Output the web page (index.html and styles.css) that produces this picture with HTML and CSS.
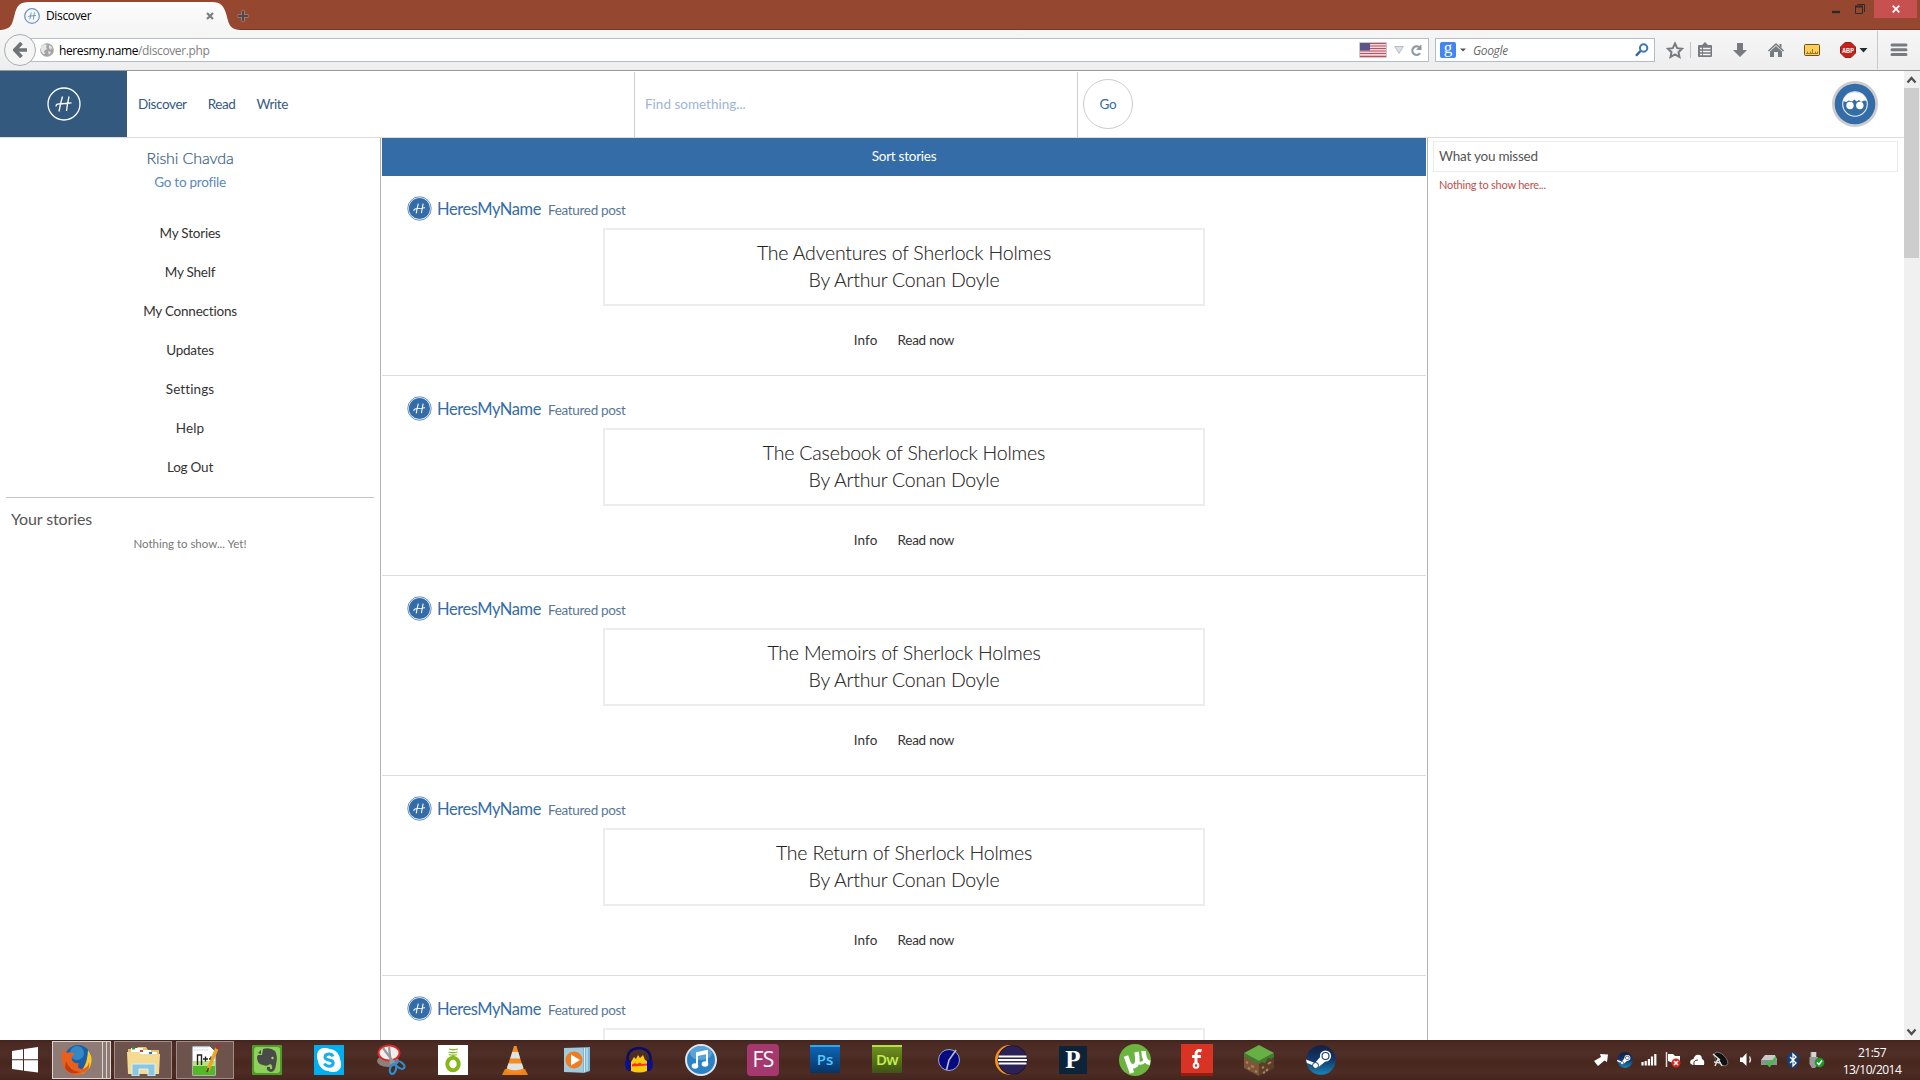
FILE: index.html
```
<!DOCTYPE html>
<html lang="en">
<head>
<meta charset="utf-8">
<title>Discover</title>
<link rel="stylesheet" href="styles.css">
</head>
<body>
<svg class="defs" aria-hidden="true">
  <symbol id="mark" viewBox="0 0 34 34"><circle cx="17" cy="17" r="16" fill="none" stroke="currentColor" stroke-width="1.3"/><path d="M15.500 9.500 13.500 17 12 24.500M22 9.500 20.500 17 19.500 24M9 19.500Q9 16.500 13 17L24.500 15.800" fill="none" stroke="currentColor" stroke-width="1.3"/></symbol>
  <symbol id="badge" viewBox="0 0 26 26"><circle cx="13" cy="13" r="12.200" fill="#fff" stroke="#346ca8" stroke-width=".8"/><circle cx="13" cy="13" r="11" fill="#346ca8"/><path d="M11.800 8 10.500 13 9.600 18M16.800 8 15.800 13 15 17.800M7 15.500Q7.500 12.800 11 13L18.800 12.200" fill="none" stroke="#fff" stroke-width="1.1"/></symbol>
  <symbol id="steam" viewBox="0 0 30 30"><linearGradient id="sg" x2="0" y2="1"><stop stop-color="#14203f"/><stop offset=".5" stop-color="#12386d"/><stop offset="1" stop-color="#1787b8"/></linearGradient><circle cx="15" cy="15" r="14.800" fill="url(#sg)"/><path d="M0 14.500 9 18 15 11 20 16 12.500 22Q9 26 6 20L.8 18Z" fill="#fff"/><circle cx="19.500" cy="11" r="5.600" fill="#fff"/><circle cx="19.500" cy="11" r="4" fill="#15396d"/><circle cx="19.500" cy="11" r="2.900" fill="#fff"/><circle cx="9.500" cy="20.500" r="3" fill="none" stroke="#15406f"/></symbol>
</svg>

<header class="titlebar">
  <svg class="tab-shape" width="240" height="30" viewBox="0 0 240 30"><defs><linearGradient id="tg" x2="0" y2="1"><stop stop-color="#fdfdfd"/><stop offset="1" stop-color="#f5f5f5"/></linearGradient></defs><path d="M0 30C12 29 12 24 14.500 15 17 5 20 2 29 2H212C221 2 224 6 226.500 15 229 25 230 29 240 30Z" fill="url(#tg)"/></svg>
  <div class="tab">
    <svg class="fav" width="16" height="16" viewBox="0 0 16 16"><circle cx="8" cy="8" r="7.300" fill="none" stroke="#6b9ac6" stroke-width="1.300"/><path d="M7.200 4.500 5.800 11.500M10.400 4.500 9.300 11.500M4 9Q4.500 7.800 6.500 8L12 7.500" fill="none" stroke="#6b9ac6"/></svg>
    <span class="tab-title">Discover</span>
    <svg class="tab-x" width="8" height="8" viewBox="0 0 8 8"><path d="M1 1 7 7M7 1 1 7" stroke="#7c8084" stroke-width="2.300"/></svg>
  </div>
  <svg class="newtab" width="12" height="12" viewBox="0 0 12 12"><path d="M6 .5V11.500M.5 6H11.500" stroke="#a9837a" stroke-width="3.600"/><path d="M6 1V11M1 6H11" stroke="#4b4a50" stroke-width="2"/></svg>
  <div class="wincontrols">
    <svg width="43" height="18" viewBox="0 0 43 18"><path d="M1 12H9" stroke="#2b2b2b" stroke-width="2.400"/><path d="M24.500 6.500H31.500V13.500H24.500ZM26.500 4.500H33.500V12" fill="none" stroke="#2b2b2b"/><path d="M24 6.500H32" stroke="#2b2b2b" stroke-width="2"/></svg>
    <div class="close"><svg width="8" height="8" viewBox="0 0 8 8"><path d="M.7.7 7.300 7.300M7.300.7.7 7.300" stroke="#fff" stroke-width="1.700"/></svg></div>
  </div>
</header>

<div class="toolbar">
  <div class="back"><svg width="15" height="16" viewBox="0 0 15 16"><path d="M8.500 1 1.800 8 8.500 15M2 8H14" fill="none" stroke="#6f7478" stroke-width="3.700"/></svg></div>
  <div class="urlbar">
    <svg width="14" height="14" viewBox="0 0 14 14"><circle cx="7" cy="7" r="6.800" fill="#a4a4a4"/><path d="M1 4 4 1 7 2 6 4 7 6 4 8 5 11 3 11 1 8ZM9 2 12 4 11 7 9 5ZM8 8 11 9 9 12Z" fill="#e6e6e6"/></svg>
    <span class="url"><b>heresmy.name</b>/discover.php</span>
    <svg class="flag" width="28" height="16" viewBox="0 0 28 16"><path d="M.5.5H27.500V15.500H.5Z" fill="#efd7db" stroke="#cfc8c8"/><path d="M1 1.500H27M1 4H27M1 6.500H27M1 9H27M1 11.500H27M1 14.300H27" stroke="#ba5060" stroke-width="1.200"/><path d="M1 1H11V8.500H1Z" fill="#5a5488"/></svg>
    <svg class="drop" width="10" height="8" viewBox="0 0 10 8"><path d="M.7.5H9.300L5 7.300Z" fill="#dce1e7" stroke="#b3bcc4"/></svg>
    <svg class="reload" width="13" height="13" viewBox="0 0 13 13"><path d="M10 9.300A4.300 4.300 0 1 1 9 3" fill="none" stroke="#8f99a3" stroke-width="2.200"/><path d="M6.500 6V5.200L10.500 1 11.500.8V6Z" fill="#8f99a3"/></svg>
  </div>
  <div class="search">
    <span class="g">g</span>
    <svg width="6" height="4" viewBox="0 0 6 4"><path d="M0 .5H6L3 3.500Z" fill="#555"/></svg>
    <i class="gname">Google</i>
    <svg class="mag" width="14" height="14" viewBox="0 0 14 14"><path d="M1 12.800 5.500 8" stroke="#2c62a0" stroke-width="2.400"/><circle cx="8.600" cy="5" r="3.700" fill="none" stroke="#3a7ab4" stroke-width="2"/></svg>
  </div>
  <svg class="tools" width="265" height="40" viewBox="1655 30 265 40">
    <path d="M1675 43.500 1677.200 48.200 1682 48.800 1678.500 52.200 1679.500 57 1675 54.500 1670.500 57 1671.500 52.200 1668 48.800 1672.800 48.200Z" fill="none" stroke="#777b7f" stroke-width="2"/>
    <path d="M1690.500 42V58" stroke="#bcc3ca"/>
    <path d="M1699 45H1702L1705 42 1708 45H1711Q1712 45 1712 46V56Q1712 57 1711 57H1699Q1698 57 1698 56V46Q1698 45 1699 45Z" fill="#777b7f"/><path d="M1700 48.500H1702M1703 48.500H1710.500M1700 51.500H1702M1703 51.500H1710.500M1700 54.500H1702M1703 54.500H1710.500" stroke="#f4f4f4" stroke-width="1.500"/>
    <path d="M1737 43H1743V50H1747L1740 57 1733 50H1737Z" fill="#777b7f"/>
    <path d="M1768.500 51 1776 44 1783.500 51" fill="none" stroke="#777b7f" stroke-width="1.600"/><path d="M1770 51.500 1776 46 1782 51.500V57H1778V52H1774V57H1770ZM1779.500 44H1781.500V48L1779.500 46Z" fill="#777b7f"/>
    <rect x="1804.500" y="44.500" width="15" height="11" rx="1" fill="#ffcf5a" stroke="#6b501c"/><path d="M1807.500 54V51.500M1810.500 54V51.500M1812.500 54V49M1815.500 54V51.500M1817.500 54V51.500M1806 53.500H1818" stroke="#9c762d"/>
    <path d="M1845 42.500H1851L1855.500 47V53L1851 57.500H1845L1840.500 53V47Z" fill="#c8201a" stroke="#902018"/><text x="1848" y="53" class="abp" text-anchor="middle" textLength="12" lengthAdjust="spacingAndGlyphs">ABP</text>
    <path d="M1859.500 48H1867.500L1863.500 52.500Z" fill="#222c33"/>
    <path d="M1877.500 31V69" stroke="#c3c9cf"/>
    <path d="M1892 45H1906M1892 49.800H1906M1892 54.500H1906" stroke="#777b7f" stroke-width="3" stroke-linecap="round"/>
  </svg>
</div>

<div class="viewport">
  <div class="page">
    <div class="topbar">
      <div class="logo"><svg width="34" height="34"><use href="#mark"/></svg></div>
      <nav class="nav"><a>Discover</a><a>Read</a><a>Write</a></nav>
      <div class="find">Find something...</div>
      <div class="go">Go</div>
      <svg class="avatar" width="46" height="46" viewBox="0 0 46 46"><circle cx="23" cy="23" r="23" fill="#ccc"/><circle cx="23" cy="23" r="20.300" fill="#346ca8"/><circle cx="23" cy="23" r="12.300" fill="none" stroke="#e6eef6" stroke-width="1.100"/><path d="M11 20A12.500 12.500 0 0 1 35 20L32 19.500 29 21 27 19 24.500 20.500 22.500 18.500 20 20.500 17 19.500 14 21Z" fill="#fff"/><circle cx="18" cy="24.500" r="3.700" fill="#fff"/><circle cx="27.800" cy="24.500" r="3.700" fill="#fff"/></svg>
    </div>
    <div class="columns">
      <aside class="left">
        <div class="name">Rishi Chavda</div>
        <div class="profile">Go to profile</div>
        <ul class="menu"><li>My Stories</li><li>My Shelf</li><li>My Connections</li><li>Updates</li><li class="loose">Settings</li><li class="loose">Help</li><li>Log Out</li></ul>
        <div class="yours">Your stories</div>
        <div class="none">Nothing to show... Yet!</div>
      </aside>
      <main class="feed">
        <div class="sort">Sort stories</div>
        <article class="post">
          <div class="by"><svg width="25" height="25"><use href="#badge"/></svg><b>HeresMyName</b><span>Featured post</span></div>
          <div class="book">The Adventures of Sherlock Holmes<br>By Arthur Conan Doyle</div>
          <div class="acts"><a class="loose">Info</a><a>Read now</a></div>
        </article>
        <article class="post">
          <div class="by"><svg width="25" height="25"><use href="#badge"/></svg><b>HeresMyName</b><span>Featured post</span></div>
          <div class="book">The Casebook of Sherlock Holmes<br>By Arthur Conan Doyle</div>
          <div class="acts"><a class="loose">Info</a><a>Read now</a></div>
        </article>
        <article class="post">
          <div class="by"><svg width="25" height="25"><use href="#badge"/></svg><b>HeresMyName</b><span>Featured post</span></div>
          <div class="book">The Memoirs of Sherlock Holmes<br>By Arthur Conan Doyle</div>
          <div class="acts"><a class="loose">Info</a><a>Read now</a></div>
        </article>
        <article class="post">
          <div class="by"><svg width="25" height="25"><use href="#badge"/></svg><b>HeresMyName</b><span>Featured post</span></div>
          <div class="book">The Return of Sherlock Holmes<br>By Arthur Conan Doyle</div>
          <div class="acts"><a class="loose">Info</a><a>Read now</a></div>
        </article>
        <article class="post">
          <div class="by"><svg width="25" height="25"><use href="#badge"/></svg><b>HeresMyName</b><span>Featured post</span></div>
          <div class="book"></div>
        </article>
      </main>
      <aside class="right">
        <div class="missed">What you missed</div>
        <div class="empty">Nothing to show here...</div>
      </aside>
    </div>
  </div>
  <div class="scroll">
    <svg width="16" height="17" viewBox="0 0 16 17"><path d="M3.500 11.500 7.500 7 11.500 11.500" fill="none" stroke="#505050" stroke-width="2.300"/></svg>
    <div class="thumb"></div>
    <svg width="16" height="17" viewBox="0 0 16 17"><path d="M3.500 6.500 7.500 11 11.500 6.500" fill="none" stroke="#505050" stroke-width="2.300"/></svg>
  </div>
</div>

<footer class="taskbar">
  <div class="start"><svg width="26" height="26" viewBox="0 0 26 26"><path d="M0 4 11 2.300V12.300H0ZM12 2.100 26 0V12.300H12ZM0 13.300H11V23.600L0 22ZM12 13.300H26V25.500L12 23.700Z" fill="#fff"/></svg></div>
  <div class="slot"><div class="win active"><svg width="32" height="32" viewBox="0 0 32 32"><circle cx="17" cy="14" r="13" fill="#1d5fa6"/><circle cx="16" cy="9" r="7" fill="#3f9ad6" opacity=".7"/><path d="M27 6Q33 14 29 23 23 32 13 30 26 28 27 6Z" fill="#ffc928"/><path d="M2 5 6 9Q9 7 14 10 10 12 11 16 13 20 18 19 15 25 21 25 27 24 28 18 30 27 20 30 9 33 3 24-1 15 2 5Z" fill="#e8601c"/><path d="M5 17Q8 27 19 28 9 32 4 24Z" fill="#c43a12"/></svg></div><i class="stack"></i><i class="stack"></i></div>
  <div class="slot"><div class="win"><svg width="34" height="32" viewBox="0 0 34 32"><path d="M2 5H10L12 3H20L22 6H33V29H2Z" fill="#e5c46a"/><path d="M5 4H17V8H5ZM12 6H25V10H12ZM20 8H31V12H20Z" fill="#fff"/><path d="M6 3.500H9V5.500H6Z" fill="#2ba03a"/><path d="M14 6H17V8H14Z" fill="#d4402b"/><path d="M23 8H26V10H23Z" fill="#2d74c8"/><path d="M1 8H13L15 10H34L33 30H2Z" fill="#f3dc92"/><path d="M6 20H29V32H22V25H13V32H6Z" fill="#8cc5e2" stroke="#d9f1fa"/></svg></div></div>
  <div class="slot"><div class="win"><svg width="30" height="33" viewBox="0 0 30 33"><path d="M2 2H20L26 8V32H2Z" fill="#fff" stroke="#606060"/><path d="M3 20H25V31H3Z" fill="#55b827"/><path d="M3 17H25V22H3Z" fill="#b7e27c"/><path d="M4 3H19M4 6H19" stroke="#b9cce0" stroke-dasharray="1.500 1"/><path d="M7.500 21V11H11.500V21M13 15H18M15.500 12.500V17.500M19 15H23M21 12.500V17.500" fill="none" stroke="#222" stroke-width="1.400"/><path d="M27 4 18 26" stroke="#e9a526" stroke-width="3.500"/><path d="M29 1 27 5" stroke="#9c3838" stroke-width="4"/><path d="M18.500 24 17 28" stroke="#51361c" stroke-width="1.500"/></svg></div></div>
  <div class="slot"><svg width="30" height="30" viewBox="0 0 30 30"><rect width="30" height="30" rx="1" fill="#4e9a2b"/><rect x="2" y="2" width="26" height="26" rx="3" fill="#8fd05a"/><path d="M11 4Q18 2 23 6 26 10 24 20 23 27 19 27 14 26 15 22H18V24H20Q21 20 18 19 15 22 11 20 5 19 5 12L6 10H10Z" fill="#4a4a48"/><path d="M6 8 9 5V9Z" fill="#4a4a48"/><circle cx="20.500" cy="13" r="1.200" fill="#9fd770"/></svg></div>
  <div class="slot"><div class="tile skype"><svg width="30" height="30" viewBox="0 0 30 30"><rect x="3" y="3" width="16" height="16" rx="7" fill="#fff"/><rect x="11" y="11" width="16" height="16" rx="7" fill="#fff"/><circle cx="15" cy="15" r="11" fill="#fff"/><path d="M19 11.500Q18 8.800 14.800 9 11 9.200 11 12 11 14.500 15 15 19.300 15.600 19.200 18.300 19 21 15 21.200 11.500 21 10.500 18.500" fill="none" stroke="#1aaeea" stroke-width="3"/></svg></div></div>
  <div class="slot"><svg width="30" height="32" viewBox="0 0 30 32"><ellipse cx="12" cy="17" rx="11" ry="6" fill="#8b807c"/><ellipse cx="13" cy="9" rx="10.500" ry="7.500" fill="#f3eeee" stroke="#d82a2a" stroke-width="2"/><path d="M7 4 19 20M13 3 15 20" stroke="#999" stroke-width="2.200"/><ellipse cx="24" cy="21" rx="5" ry="3" transform="rotate(35 24 21)" fill="none" stroke="#2d8fd0" stroke-width="2.200"/><ellipse cx="17" cy="25" rx="3" ry="5" transform="rotate(15 17 25)" fill="none" stroke="#2d8fd0" stroke-width="2.200"/></svg></div>
  <div class="slot"><div class="tile white"><svg width="30" height="30" viewBox="0 0 30 30"><ellipse cx="15" cy="19" rx="5.700" ry="6.300" fill="none" stroke="#86b817" stroke-width="4"/><path d="M11 9.500Q15 11 19 9.500M10.500 7Q15 8.500 19.500 7M11 4Q15 5.500 20 4" fill="none" stroke="#86b817" stroke-width="1.300"/></svg></div></div>
  <div class="slot"><svg width="26" height="31" viewBox="0 0 26 31"><path d="M3 24H23L26 30H0Z" fill="#f08218"/><path d="M12 1H14.500L22 26Q13 31 4 26Z" fill="#f58a1f"/><path d="M10.300 7H16.200L18.200 13.500H8.300ZM6.300 18.500H20L21.600 23.500Q13 27 4.800 23.500Z" fill="#dfe3e6"/></svg></div>
  <div class="slot"><svg width="26" height="26" viewBox="0 0 26 26"><path d="M0 1 26 0V24L20 26 0 25Z" fill="#7fb6d2"/><path d="M0 1H19V25H0Z" fill="#a2cadd"/><path d="M20.500 1V25M23 1V24" stroke="#d7edf6"/><circle cx="10" cy="13" r="8.500" fill="#f07c1e"/><path d="M7 7.500 16 13 7 18.500Z" fill="#fff"/></svg></div>
  <div class="slot"><svg width="30" height="28" viewBox="0 0 30 28"><path d="M7 25V16L10 11 12 13 14 9 16 12 19 9 21 14 23 15V25Q15 28 7 25Z" fill="#ffc80a"/><path d="M8 18.500 11 17 13 18 16 16.500 18 18 23 17.500V19.500L8 20.500Z" fill="#f03810"/><path d="M4 18Q1 3 15 2 29 3 26 18" fill="none" stroke="#080d66" stroke-width="2.600"/><path d="M2 14H7V25H4Q-1 20 2 14ZM28 14H23V25H26Q31 20 28 14Z" fill="#0a1190"/></svg></div>
  <div class="slot"><svg width="32" height="32" viewBox="0 0 32 32"><circle cx="16" cy="16" r="15" fill="#2b83c6" stroke="#e4e6e8" stroke-width="2"/><ellipse cx="16" cy="9" rx="11" ry="7" fill="#77b9e6" opacity=".6"/><path d="M12 21V9L22 7V19" fill="none" stroke="#fff" stroke-width="2"/><path d="M12 10.500 22 8.500" stroke="#fff" stroke-width="3"/><ellipse cx="10" cy="22" rx="3.300" ry="2.700" fill="#fff"/><ellipse cx="20" cy="20" rx="3.300" ry="2.700" fill="#fff"/></svg></div>
  <div class="slot"><div class="tile fs">FS</div></div>
  <div class="slot"><div class="tile ps">Ps</div></div>
  <div class="slot"><div class="tile dw">Dw</div></div>
  <div class="slot"><svg width="24" height="24" viewBox="0 0 24 24"><circle cx="12" cy="12" r="10.500" fill="#050a80" stroke="#a3a3c8"/><path d="M19 2 12 12 9.500 22" fill="none" stroke="#c0bccb" stroke-width="1.600"/></svg></div>
  <div class="slot"><svg width="34" height="32" viewBox="0 0 34 32"><circle cx="16" cy="16" r="15" fill="#f7941e"/><circle cx="18.500" cy="16" r="14.500" fill="#2c2255" stroke="#1c1530"/><path d="M4.500 12.500H32.500M4 16H33M4.500 19.500H32.500" stroke="#fff" stroke-width="2"/></svg></div>
  <div class="slot"><div class="tile pp">P</div></div>
  <div class="slot"><svg width="32" height="32" viewBox="0 0 32 32"><circle cx="16" cy="16" r="16" fill="#6cb33f"/><path d="M7 12 13 29M10 20Q13 24 17 21 19.500 18 17.500 8M24.500 7Q25 18 31 19" fill="none" stroke="#fff" stroke-width="4.600"/><path d="M17.500 16Q20 22 26 17" fill="none" stroke="#fff" stroke-width="3"/></svg></div>
  <div class="slot"><div class="tile ff"><svg width="32" height="32" viewBox="0 0 32 32"><path d="M20.500 7Q15 5 15 11V20M11 12.500H20" fill="none" stroke="#fff" stroke-width="3"/><circle cx="15" cy="21.500" r="2.300" fill="none" stroke="#fff" stroke-width="2"/></svg></div></div>
  <div class="slot"><svg width="30" height="32" viewBox="0 0 30 32"><path d="M0 9 15 15V32L0 24Z" fill="#7d5638"/><path d="M30 9 15 15V32L30 24Z" fill="#5d3e29"/><path d="M15 1 30 9 15 17 0 9Z" fill="#66b045"/><path d="M0 9 15 17V20L12 18 10 19 7 15 5 16 3 13 0 14ZM30 9 15 17V20L18 18 21 19 24 14 27 15 30 13Z" fill="#3f7c2d"/><path d="M2 18 4 19M7 22 10 23M4 24 6 25M11 27 13 28M18 24 20 23M24 20 27 18M22 27 24 25M19 29 21 28" stroke="#a78462" stroke-width="2"/></svg></div>
  <div class="slot"><svg width="30" height="30"><use href="#steam"/></svg></div>

  <svg class="tray" width="240" height="20" viewBox="1590 1051 240 20">
    <path d="M1594 1062 1601 1058 1600 1055 1608 1055.500 1607 1063 1604.500 1061.500 1598 1067Z" fill="#fff"/>
    <svg x="1617" y="1053" width="16" height="16"><use href="#steam"/></svg>
    <path d="M1642.500 1063V1066.500M1645.700 1062V1066.500M1648.900 1060V1066.500M1652 1057.500V1066.500M1655.300 1055V1066.500" stroke="#fff" stroke-width="2.200"/>
    <path d="M1666.500 1053V1068" stroke="#ddd" stroke-width="1.500"/><path d="M1668 1055H1673L1675 1057H1680V1064H1673L1668 1062Z" fill="#fff"/><circle cx="1676" cy="1064" r="4.500" fill="#d8281e"/><path d="M1674 1062 1678 1066M1678 1062 1674 1066" stroke="#fff" stroke-width="1.500"/>
    <path d="M1693 1066Q1689 1065 1690.500 1061.500 1692 1060 1693.500 1060 1695 1054.500 1700 1056 1702 1057 1702 1060 1705 1061 1704 1066Z" fill="#fff"/><path d="M1694 1066Q1693 1061 1698 1061" fill="none" stroke="#4a2a22"/>
    <ellipse cx="1721" cy="1060" rx="8.500" ry="4.500" transform="rotate(45 1721 1060)" fill="#111" stroke="#8c8c8c" stroke-width=".7"/><path d="M1713 1055 1720 1061M1715 1067 1718 1060 1722 1067M1714 1063 1721 1064" stroke="#ddd" stroke-width="1.500" fill="none"/>
    <path d="M1740 1058.500H1742.500L1746.500 1054V1067L1742.500 1063H1740Z" fill="#fff"/><path d="M1749.500 1057.500Q1751.500 1060.700 1749.500 1063.500" fill="none" stroke="#ddd" stroke-width="1.300"/>
    <path d="M1761 1061 1765 1056H1775L1777 1061V1066H1761Z" fill="#c8c8c8"/><path d="M1761 1061H1777V1066H1761Z" fill="#909090"/><path d="M1766 1062.500 1769.500 1066.500 1776 1058.500" fill="none" stroke="#3bc143" stroke-width="2.600"/>
    <ellipse cx="1793" cy="1061" rx="6" ry="8" fill="#153f79"/><path d="M1790 1058 1796 1064 1793 1067V1055L1796 1058 1790 1064" fill="none" stroke="#fff" stroke-width="1.300"/>
    <path d="M1810.500 1053H1816.500V1058H1818V1065L1815 1069H1812L1809.500 1065V1058H1810.500Z" fill="#9a9a9a"/><path d="M1811.500 1053H1816V1058H1811.500Z" fill="#d6d6d6"/><circle cx="1819.500" cy="1063.500" r="4.800" fill="#189b27"/><path d="M1817 1063.500 1819 1065.500 1822 1061.500" fill="none" stroke="#fff" stroke-width="1.500"/>
  </svg>
  <div class="clock"><span>21:57</span><span>13/10/2014</span></div>
</footer>
</body>
</html>
```
FILE: styles.css
```
* { box-sizing: border-box; }
body { margin: 0; width: 1920px; height: 1080px; overflow: hidden; display: flex; flex-direction: column; background: #fff; font-family: Lato, "Liberation Sans", sans-serif; font-size: 13.5px; letter-spacing: -.22px; color: #333; }
svg { display: block; flex: none; }
.defs { position: absolute; width: 0; height: 0; }

/* browser chrome */
.titlebar { height: 30px; flex: none; display: flex; position: relative; background: #96472f; border-bottom: 1px solid #7c3629; font-family: "Open Sans", "Noto Sans", sans-serif; }
.tab-shape { position: absolute; left: 0; top: 0; }
.tab { position: relative; width: 232px; display: flex; align-items: center; padding: 2px 18px 0 24px; }
.tab-title { margin-left: 6px; flex: 1; font-size: 12px; letter-spacing: -.35px; color: #000; }
.newtab { margin: 10px 0 0 5px; }
.wincontrols { margin-left: auto; display: flex; height: 18px; padding-right: 3px; }
.close { width: 43px; height: 18px; background: #c75050; display: flex; align-items: center; justify-content: center; }
.toolbar { height: 41px; flex: none; display: flex; align-items: center; background: linear-gradient(#f6f6f6, #eee); border-bottom: 1px solid #999; font-family: "Open Sans", "Noto Sans", sans-serif; }
.back { width: 32px; height: 32px; margin-left: 4px; border: 1px solid #a9adb1; border-radius: 50%; background: #f5f5f5; display: flex; align-items: center; justify-content: center; z-index: 1; }
.urlbar { width: 1401px; height: 24px; margin-left: -8px; border: 1px solid #b4bcc5; background: #fff; display: flex; align-items: center; padding: 0 5px 0 11px; }
.url { margin-left: 5px; flex: 1; font-size: 12px; letter-spacing: -.38px; color: #808080; }
.url b { font-weight: 400; color: #000; }
.drop { margin-left: 7px; }
.reload { margin-left: 6px; }
.search { width: 220px; height: 24px; margin-left: 6px; border: 1px solid #b4bcc5; background: #fff; display: flex; align-items: center; padding: 0 5px 0 4px; }
.g { width: 16px; height: 16px; border-radius: 2px; background: #4285f4; color: #fff; font: 17px/11px "Liberation Serif", serif; text-align: center; margin-right: 4px; }
.gname { margin-left: 7px; flex: 1; font-size: 12px; letter-spacing: -.35px; color: #6a6a6a; }
.abp { font: bold 8px "Liberation Sans", sans-serif; fill: #fff; letter-spacing: 0; }

/* site */
.viewport { height: 969px; flex: none; display: flex; overflow: hidden; }
.page { width: 1904px; display: flex; flex-direction: column; }
.topbar { height: 67px; flex: none; display: flex; align-items: center; border-bottom: 1px solid #dcdcdc; }
.logo { width: 127px; height: 66px; background: #34597f; color: #fff; display: flex; align-items: center; justify-content: center; }
.nav { width: 507px; display: flex; gap: 21px; padding-left: 11px; color: #34597f; letter-spacing: -.4px; }
.find { width: 444px; height: 65px; align-self: flex-end; line-height: 65px; padding-left: 10px; border: solid #ccc; border-width: 0 1px; color: #9db5d3; letter-spacing: 0; }
.go { width: 50px; height: 50px; margin-left: 5px; border: 1px solid #ccc; border-radius: 50%; line-height: 48px; text-align: center; color: #346ca8; }
.avatar { margin: 0 26px 0 auto; }
.columns { flex: 1; min-height: 0; display: flex; }
.left { width: 381px; border-right: 1px solid #b3b3b3; padding: 7px 0 0; text-align: center; }
.name { font-size: 16px; font-weight: 300; line-height: 25px; letter-spacing: -.1px; color: #34597f; -webkit-text-stroke: .2px; }
.profile { line-height: 25px; color: #5a88bd; letter-spacing: -.25px; }
.menu { list-style: none; margin: 19px 6px 0; padding: 0 0 10px; border-bottom: 1px solid #c4c4c4; color: #333; }
.menu li { height: 39px; line-height: 39px; }
.menu .loose, .acts .loose { letter-spacing: .1px; }
.yours { margin-top: 9px; padding-left: 11px; text-align: left; font-size: 16px; line-height: 24px; letter-spacing: -.12px; color: #555; }
.none { font-size: 11.5px; line-height: 25px; letter-spacing: -.03px; color: #777; }
.feed { width: 1046px; padding: 0 1px; }
.sort { height: 38px; line-height: 37px; background: #346ca8; color: #fff; text-align: center; letter-spacing: -.25px; }
.post { height: 200px; border-bottom: 1px solid #dcdcdc; padding: 20px 25px 0; }
.by { display: flex; height: 25px; line-height: 27px; }
.by b { margin-left: 5px; font-size: 16.5px; font-weight: 400; letter-spacing: -.42px; color: #346ca8; }
.by span { margin-left: 7px; padding-top: 1px; letter-spacing: -.33px; color: #5a7796; }
.book { width: 602px; height: 78px; margin: 7px auto 0; border: 2px solid #ececec; padding-top: 9px; text-align: center; font-size: 19.5px; line-height: 27px; font-weight: 300; letter-spacing: -.2px; color: #222; -webkit-text-stroke: .1px; }
.acts { display: flex; justify-content: center; gap: 20px; margin-top: 22px; line-height: 25px; color: #333; }
.right { flex: 1; border-left: 1px solid #b3b3b3; padding: 3px 6px 0 5px; }
.missed { height: 31px; line-height: 28px; border: 1px solid #ececec; padding-left: 5px; color: #555; }
.empty { padding-left: 6px; font-size: 11px; line-height: 25px; letter-spacing: -.24px; color: #c0504a; }
.scroll { width: 16px; background: #f0f0f0; display: flex; flex-direction: column; }
.thumb { width: 15px; height: 170px; background: #cdcdcd; margin-bottom: auto; }

/* taskbar */
.taskbar { height: 40px; flex: none; display: flex; align-items: center; background: linear-gradient(#3f231c, #4b2a23 3px, #4f2e27 14px, #48271f 22px, #4d2c25 32px, #44251e); color: #fff; font-family: "Open Sans", "Noto Sans", sans-serif; }
.start { width: 50px; padding-left: 12px; }
.slot { width: 62px; height: 40px; display: flex; align-items: center; justify-content: center; }
.win { width: 58px; height: 38px; border: 1px solid #a08d88; background: #6e534d; display: flex; align-items: center; justify-content: center; }
.active { width: 51px; background: #8f7b76; border: 1px solid #ddd5d3; }
.stack { width: 4px; height: 38px; border: 1px solid #ddd5d3; border-left: 0; background: #8f7b76; }
.tile { width: 30px; height: 30px; text-align: center; letter-spacing: 0; }
.skype { background: #00aff0; }
.white { background: #fff; }
.fs { width: 32px; height: 32px; border-radius: 4px; background: #a5386e; font-size: 21px; font-weight: 500; line-height: 31px; letter-spacing: -.8px; }
.ps { height: 28px; margin-bottom: 3px; background: linear-gradient(#0d64b4, #083465); border-top: 2px solid #29a9ec; color: #58c8f8; font-size: 15px; font-weight: 600; line-height: 25px; }
.dw { height: 28px; margin-bottom: 3px; background: linear-gradient(#6f8f20, #3d5412); border-top: 2px solid #b4e33a; color: #c6ef4e; font-size: 15px; font-weight: 600; line-height: 25px; letter-spacing: -.5px; }
.pp { width: 28px; height: 28px; background: #0c2438; font: bold 25px/28px "Liberation Serif", serif; }
.ff { width: 32px; height: 32px; background: #d93324; border-bottom: 3px solid #8d1f13; }
.tray { margin-left: 238px; }
.clock { width: 84px; display: flex; flex-direction: column; align-items: center; padding-top: 2px; font-size: 12px; line-height: 17px; letter-spacing: -.5px; }
```
